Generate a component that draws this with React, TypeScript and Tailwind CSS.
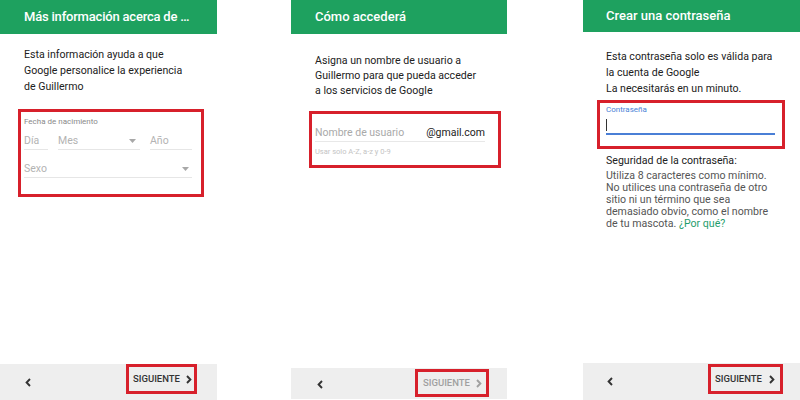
import React from "react";

const font = { fontFamily: "Roboto, 'Liberation Sans', sans-serif" };

function ChevronLeft({ className = "" }: { className?: string }) {
  return (
    <svg width="6" height="9" viewBox="0 0 6 9" className={className}>
      <path d="M5 1 L1.6 4.5 L5 8" fill="none" stroke="currentColor" strokeWidth="1.9" />
    </svg>
  );
}

function ChevronRight({ className = "" }: { className?: string }) {
  return (
    <svg width="6" height="9" viewBox="0 0 6 9" className={className}>
      <path d="M1 1 L4.4 4.5 L1 8" fill="none" stroke="currentColor" strokeWidth="1.9" />
    </svg>
  );
}

function Caret() {
  return (
    <svg width="7" height="4" viewBox="0 0 7 4">
      <path d="M0 0 L7 0 L3.5 4 Z" fill="#a8a8a8" />
    </svg>
  );
}

function Header({ title, h }: { title: string; h: string }) {
  return (
    <div className={`${h} bg-[#1ea15f] flex items-center pl-[24px] text-white text-[13px] font-medium`}>
      {title}
    </div>
  );
}

export default function App() {
  return (
    <div className="w-[800px] h-[400px] bg-white flex overflow-hidden" style={font}>
      {/* screen 1 */}
      <div className="w-[217px] h-[400px] flex flex-col">
        <Header title="Más información acerca de …" h="h-[34px] tracking-[-0.2px]" />
        <p className="mt-[13px] px-[24px] text-[10.6px] leading-[16px] text-[#212121]">
          Esta información ayuda a que
          <br />
          Google personalice la experiencia
          <br />
          de Guillermo
        </p>
        <div className="mt-[14px] ml-[18px] w-[186px] h-[88px] border-[3px] border-[#d7202b] pl-[3px] pr-[9px]">
          <div className="pt-[5px] text-[8px] leading-[10px] text-[#8a8a8a]">Fecha de nacimiento</div>
          <div className="mt-[6px] flex gap-[10px] text-[10.5px] leading-[16px] text-[#b3b3b3]">
            <div className="w-[24px] border-b border-[#e6e6e6]">Día</div>
            <div className="w-[82px] border-b border-[#e6e6e6] flex items-center justify-between pr-[4px]">
              <span>Mes</span>
              <Caret />
            </div>
            <div className="w-[42px] border-b border-[#e6e6e6]">Año</div>
          </div>
          <div className="mt-[11px] flex items-center justify-between pr-[3px] border-b border-[#e6e6e6] text-[10.5px] leading-[16px] text-[#b3b3b3]">
            <span>Sexo</span>
            <Caret />
          </div>
        </div>
        <div className="flex-1" />
        <div className="h-[36px] bg-[#eeeeee] flex items-start justify-between">
          <ChevronLeft className="ml-[25px] mt-[14px] text-[#333]" />
          <div className="mr-[20px] w-[71px] h-[30px] border-[3px] border-[#d7202b] flex items-center justify-between pl-[4px] pr-[2px] text-[#333]">
            <span className="text-[9.5px] font-medium">SIGUIENTE</span>
            <ChevronRight />
          </div>
        </div>
      </div>

      {/* screen 2 */}
      <div className="ml-[74px] w-[216px] h-[400px] flex flex-col">
        <Header title="Cómo accederá" h="h-[34px]" />
        <p className="mt-[19px] px-[24px] text-[10.6px] leading-[15px] text-[#212121]">
          Asigna un nombre de usuario a
          <br />
          Guillermo para que pueda acceder
          <br />
          a los servicios de Google
        </p>
        <div className="mt-[13px] ml-[18px] w-[192px] h-[57px] border-[3px] border-[#d7202b] pl-[3px] pr-[13px]">
          <div className="mt-[11px] flex items-center justify-between border-b border-[#e8e8e8] text-[10.5px] leading-[16px]">
            <span className="text-[#a9a9a9]">Nombre de usuario</span>
            <span className="text-[#222]">@gmail.com</span>
          </div>
          <div className="mt-[5px] text-[7.5px] leading-[10px] text-[#c4c4c4]">Usar solo A-Z, a-z y 0-9</div>
        </div>
        <div className="flex-1" />
        <div className="h-[31px] mb-[1px] bg-[#eeeeee] flex items-start justify-between">
          <ChevronLeft className="ml-[26px] mt-[12px] text-[#333]" />
          <div className="mr-[18px] mt-[1px] w-[74px] h-[28px] border-[3px] border-[#d7202b] flex items-center justify-between pl-[5px] pr-[4px] text-[#a0a0a0]">
            <span className="text-[9.5px] font-medium">SIGUIENTE</span>
            <ChevronRight />
          </div>
        </div>
      </div>

      {/* screen 3 */}
      <div className="ml-[76px] w-[217px] h-[400px] flex flex-col">
        <Header title="Crear una contraseña" h="h-[32px] !pl-[23px]" />
        <p className="mt-[17px] px-[23px] text-[10.6px] leading-[16px] text-[#212121]">
          Esta contraseña solo es válida para
          <br />
          la cuenta de Google
          <br />
          La necesitarás en un minuto.
        </p>
        <div className="mt-[3px] ml-[14px] w-[188px] h-[49px] border-[3px] border-[#d7202b] pl-[6px] pr-[7px]">
          <div className="pt-[2px] text-[8px] leading-[10px] text-[#4a7fd6]">Contraseña</div>
          <div className="h-[20px] border-b-2 border-[#4a7fd6] flex items-end pb-[2px]">
            <div className="w-[1px] h-[12px] bg-[#333]" />
          </div>
        </div>
        <div className="mt-[5px] px-[23px] text-[10.6px] leading-[14px] text-[#212121]">Seguridad de la contraseña:</div>
        <p className="mt-[2px] px-[23px] text-[10.6px] leading-[12px] text-[#555]">
          Utiliza 8 caracteres como mínimo.
          <br />
          No utilices una contraseña de otro
          <br />
          sitio ni un término que sea
          <br />
          demasiado obvio, como el nombre
          <br />
          de tu mascota. <span className="text-[#1f9d6c]">¿Por qué?</span>
        </p>
        <div className="flex-1" />
        <div className="h-[37px] bg-[#eeeeee] flex items-start justify-between">
          <ChevronLeft className="ml-[24px] mt-[14px] text-[#333]" />
          <div className="mr-[17px] mt-[1px] w-[75px] h-[30px] border-[3px] border-[#d7202b] flex items-center justify-between pl-[4px] pr-[5px] text-[#333]">
            <span className="text-[9.5px] font-medium">SIGUIENTE</span>
            <ChevronRight />
          </div>
        </div>
      </div>
    </div>
  );
}
